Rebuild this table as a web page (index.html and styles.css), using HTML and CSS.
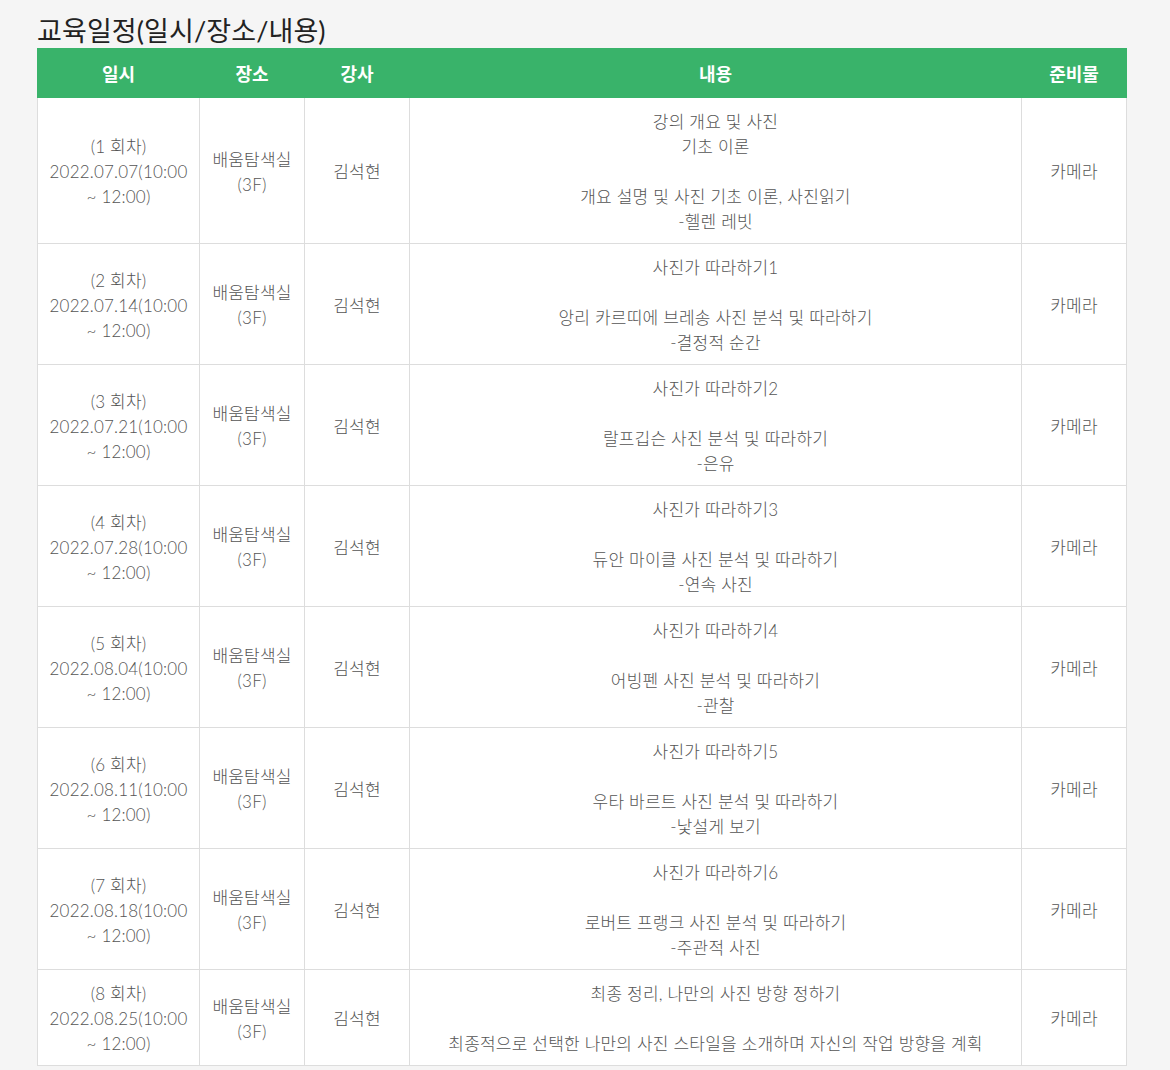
FILE: index.html
```html
<!DOCTYPE html>
<html lang="ko">
<head>
<meta charset="utf-8">
<link rel="stylesheet" href="styles.css">
</head>
<body>
<div class="page">
  <h2 class="title">교육일정(일시/장소/내용)</h2>
  <table class="schedule">
    <colgroup>
      <col class="c-date"><col class="c-place"><col class="c-teacher"><col class="c-content"><col class="c-prep">
    </colgroup>
    <thead>
      <tr><th>일시</th><th>장소</th><th>강사</th><th>내용</th><th>준비물</th></tr>
    </thead>
    <tbody>
      <tr>
        <td>(1 회차)<br>2022.07.07(10:00<br>~ 12:00)</td>
        <td>배움탐색실<br>(3F)</td>
        <td>김석현</td>
        <td>강의 개요 및 사진<br>기초 이론<br><br>개요 설명 및 사진 기초 이론, 사진읽기<br>-헬렌 레빗</td>
        <td>카메라</td>
      </tr>
      <tr>
        <td>(2 회차)<br>2022.07.14(10:00<br>~ 12:00)</td>
        <td>배움탐색실<br>(3F)</td>
        <td>김석현</td>
        <td>사진가 따라하기1<br><br>앙리 카르띠에 브레송 사진 분석 및 따라하기<br>-결정적 순간</td>
        <td>카메라</td>
      </tr>
      <tr>
        <td>(3 회차)<br>2022.07.21(10:00<br>~ 12:00)</td>
        <td>배움탐색실<br>(3F)</td>
        <td>김석현</td>
        <td>사진가 따라하기2<br><br>랄프깁슨 사진 분석 및 따라하기<br>-은유</td>
        <td>카메라</td>
      </tr>
      <tr>
        <td>(4 회차)<br>2022.07.28(10:00<br>~ 12:00)</td>
        <td>배움탐색실<br>(3F)</td>
        <td>김석현</td>
        <td>사진가 따라하기3<br><br>듀안 마이클 사진 분석 및 따라하기<br>-연속 사진</td>
        <td>카메라</td>
      </tr>
      <tr>
        <td>(5 회차)<br>2022.08.04(10:00<br>~ 12:00)</td>
        <td>배움탐색실<br>(3F)</td>
        <td>김석현</td>
        <td>사진가 따라하기4<br><br>어빙펜 사진 분석 및 따라하기<br>-관찰</td>
        <td>카메라</td>
      </tr>
      <tr>
        <td>(6 회차)<br>2022.08.11(10:00<br>~ 12:00)</td>
        <td>배움탐색실<br>(3F)</td>
        <td>김석현</td>
        <td>사진가 따라하기5<br><br>우타 바르트 사진 분석 및 따라하기<br>-낯설게 보기</td>
        <td>카메라</td>
      </tr>
      <tr>
        <td>(7 회차)<br>2022.08.18(10:00<br>~ 12:00)</td>
        <td>배움탐색실<br>(3F)</td>
        <td>김석현</td>
        <td>사진가 따라하기6<br><br>로버트 프랭크 사진 분석 및 따라하기<br>-주관적 사진</td>
        <td>카메라</td>
      </tr>
      <tr>
        <td>(8 회차)<br>2022.08.25(10:00<br>~ 12:00)</td>
        <td>배움탐색실<br>(3F)</td>
        <td>김석현</td>
        <td>최종 정리, 나만의 사진 방향 정하기<br><br>최종적으로 선택한 나만의 사진 스타일을 소개하며 자신의 작업 방향을 계획</td>
        <td>카메라</td>
      </tr>
    </tbody>
  </table>
</div>
</body>
</html>
```
FILE: styles.css
```css
html, body {
  margin: 0;
  background: #f5f5f5;
}
.page {
  padding: 14px 44px 0 37px;
  font-family: Lato, "Noto Sans CJK KR", sans-serif;
}
.title {
  margin: 0;
  font-size: 27px;
  line-height: 34px;
  font-weight: 400;
  color: #222;
  letter-spacing: 0.1px;
}
.schedule {
  width: 1089px;
  border-collapse: collapse;
  table-layout: fixed;
  background: #fff;
  border: 1px solid #ddd;
}
.c-date { width: 162px; }
.c-place { width: 105px; }
.c-teacher { width: 105px; }
.c-content { width: 612px; }
.c-prep { width: 105px; }
.schedule th {
  background: #39b36a;
  color: #fff;
  font-size: 18px;
  font-weight: 700;
  height: 48px;
  padding: 0;
  border: 1px solid #39b36a;
  text-align: center;
}
.schedule td {
  border: 1px solid #ddd;
  padding: 11px 2px 9px;
  font-size: 17px;
  font-weight: 300;
  line-height: 25px;
  color: #555;
  text-align: center;
  vertical-align: middle;
  letter-spacing: 0.2px;
}
```
